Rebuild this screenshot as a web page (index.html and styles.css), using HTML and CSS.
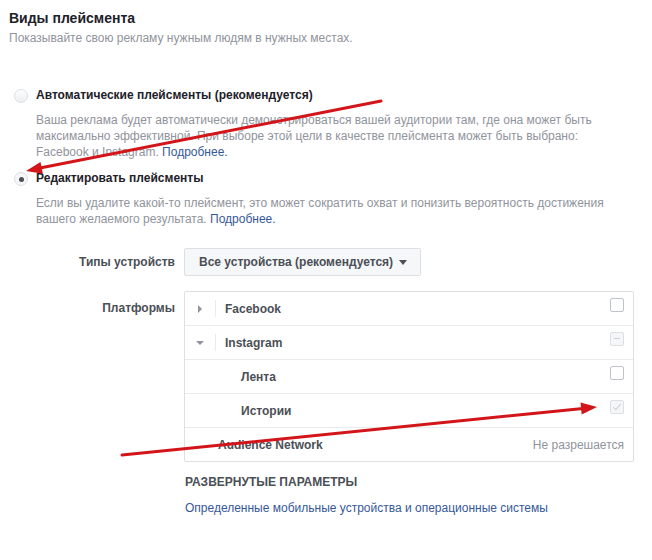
FILE: index.html
```html
<!DOCTYPE html>
<html lang="ru">
<head>
    <meta charset="UTF-8">
    <title>Виды плейсмента</title>
    <link rel="stylesheet" href="styles.css">
</head>
<body>
    <main class="placements">
        <header class="section-head">
            <h1>Виды плейсмента</h1>
            <p>Показывайте свою рекламу нужным людям в нужных местах.</p>
        </header>

        <div class="choice">
            <span class="radio"></span>
            <div class="choice-body">
                <h2>Автоматические плейсменты (рекомендуется)</h2>
                <p>Ваша реклама будет автоматически демонстрироваться вашей аудитории там, где она может быть максимально эффективной. При выборе этой цели в качестве плейсмента может быть выбрано: Facebook и Instagram. <a href="#">Подробнее.</a></p>
            </div>
        </div>

        <div class="choice">
            <span class="radio checked"></span>
            <div class="choice-body">
                <h2>Редактировать плейсменты</h2>
                <p>Если вы удалите какой-то плейсмент, это может сократить охват и понизить вероятность достижения вашего желаемого результата. <a href="#">Подробнее.</a></p>
            </div>
        </div>

        <div class="field">
            <label>Типы устройств</label>
            <div>
                <button class="select">Все устройства (рекомендуется) <span class="caret"></span></button>
            </div>
        </div>

        <div class="field platforms">
            <label>Платформы</label>
            <ul class="tree">
                <li class="row">
                    <span class="toggle"><span class="tri-right"></span></span>
                    <span class="name">Facebook</span>
                    <span class="box"></span>
                </li>
                <li class="row">
                    <span class="toggle"><span class="tri-down"></span></span>
                    <span class="name">Instagram</span>
                    <span class="box disabled mixed"></span>
                </li>
                <li class="row child">
                    <span class="name">Лента</span>
                    <span class="box"></span>
                </li>
                <li class="row child">
                    <span class="name">Истории</span>
                    <span class="box disabled checked"></span>
                </li>
                <li class="row plain">
                    <span class="name">Audience Network</span>
                    <span class="note">Не разрешается</span>
                </li>
            </ul>
        </div>

        <div class="advanced">
            <h3>РАЗВЕРНУТЫЕ ПАРАМЕТРЫ</h3>
            <a href="#">Определенные мобильные устройства и операционные системы</a>
        </div>
    </main>

    <svg class="arrows" width="652" height="560" viewBox="0 0 652 560">
        <line x1="381" y1="101" x2="40" y2="168" />
        <polygon points="26,171 42.9,173.8 40.5,162" />
        <line x1="122" y1="455" x2="583" y2="408.5" />
        <polygon points="597,407 581.7,414.6 580.5,402.6" />
    </svg>
</body>
</html>
```

FILE: styles.css
```css
html, body {
    margin: 0;
    padding: 0;
    background: #fff;
}

body {
    position: relative;
    width: 652px;
    height: 560px;
    overflow: hidden;
    font-family: "Liberation Sans", Arial, sans-serif;
    font-size: 12px;
    color: #1d2129;
}

a {
    color: #365899;
    text-decoration: none;
}

.placements {
    padding: 10px 20px 0 9px;
}

.section-head h1 {
    margin: 0;
    font-size: 14px;
    line-height: 17px;
    font-weight: bold;
}

.section-head p {
    margin: 3px 0 0;
    color: #90949c;
    line-height: 16px;
}

/* radio choices */

.choice {
    display: flex;
    gap: 8px;
    margin-top: 11px;
    padding-left: 5px;
}

.section-head + .choice {
    margin-top: 42px;
}

.radio {
    flex: none;
    width: 12px;
    height: 12px;
    margin-top: 1px;
    border: 1px solid #dddfe2;
    border-radius: 50%;
    background: linear-gradient(#fff, #eceef1);
    box-sizing: content-box;
    position: relative;
}

.radio.checked {
    background: #f5f6f7;
}

.radio.checked::after {
    content: "";
    position: absolute;
    left: 3.5px;
    top: 3.5px;
    width: 5px;
    height: 5px;
    border-radius: 50%;
    background: #4b4f56;
}

.choice-body h2 {
    margin: 0;
    font-size: 12px;
    line-height: 15px;
    font-weight: bold;
}

.choice-body p {
    margin: 9px 0 0;
    color: #90949c;
    line-height: 16px;
}

/* labelled fields */

.field {
    display: grid;
    grid-template-columns: 166px 1fr;
    column-gap: 9px;
    align-items: center;
    margin-top: 21px;
}

.field label {
    text-align: right;
    font-weight: bold;
    color: #4b4f56;
}

.select {
    display: inline-flex;
    align-items: center;
    gap: 6px;
    height: 28px;
    padding: 0 13px 0 14px;
    border: 1px solid #dddfe2;
    border-radius: 2px;
    background: #f6f7f9;
    font: bold 12px "Liberation Sans", Arial, sans-serif;
    color: #4b4f56;
}

.caret {
    width: 0;
    height: 0;
    border-left: 4px solid transparent;
    border-right: 4px solid transparent;
    border-top: 5px solid #4b4f56;
}

.platforms {
    margin-top: 15px;
    align-items: start;
}

.platforms label {
    padding-top: 10px;
}

.tree {
    margin: 0;
    padding: 0;
    list-style: none;
    width: 448px;
    border: 1px solid #dddfe2;
    border-radius: 2px;
}

.row {
    display: flex;
    align-items: center;
    height: 33px;
    padding: 0 9px 0 0;
    border-top: 1px solid #e9ebee;
}

.row:first-child {
    border-top: 0;
}

.toggle {
    display: flex;
    align-items: center;
    justify-content: center;
    width: 30px;
    height: 17px;
    margin-right: 9px;
    border-right: 1px solid #e9ebee;
}

.tri-right {
    width: 0;
    height: 0;
    border-top: 4px solid transparent;
    border-bottom: 4px solid transparent;
    border-left: 4px solid #90949c;
}

.tri-down {
    width: 0;
    height: 0;
    border-left: 4px solid transparent;
    border-right: 4px solid transparent;
    border-top: 4px solid #90949c;
}

.name {
    flex: 1;
    font-weight: bold;
    color: #4b4f56;
}

.child .name {
    padding-left: 56px;
}

.plain .name {
    padding-left: 33px;
}

.note {
    color: #90949c;
}

.box {
    width: 12px;
    height: 12px;
    border: 1px solid #bec3c9;
    border-radius: 2px;
    background: #fff;
    position: relative;
    margin-top: -8px;
}

.box.disabled {
    border-color: #dddfe2;
    background: #f5f6f7;
}

.box.mixed::after {
    content: "";
    position: absolute;
    left: 3px;
    top: 5px;
    width: 6px;
    height: 1px;
    background: #ccd0d5;
}

.box.checked::after {
    content: "";
    position: absolute;
    left: 4px;
    top: 1px;
    width: 3px;
    height: 7px;
    border-right: 1px solid #ccd0d5;
    border-bottom: 1px solid #ccd0d5;
    transform: rotate(40deg);
}

/* advanced */

.advanced {
    margin: 13px 0 0 176px;
}

.advanced h3 {
    margin: 0;
    font-size: 12px;
    line-height: 15px;
    font-weight: bold;
    color: #4b4f56;
}

.advanced a {
    display: block;
    margin-top: 10px;
    line-height: 16px;
}

/* annotation arrows */

.arrows {
    position: absolute;
    left: 0;
    top: 0;
    pointer-events: none;
}

.arrows line {
    stroke: #d3151a;
    stroke-width: 3;
    stroke-linecap: round;
}

.arrows polygon {
    fill: #d3151a;
}
```
